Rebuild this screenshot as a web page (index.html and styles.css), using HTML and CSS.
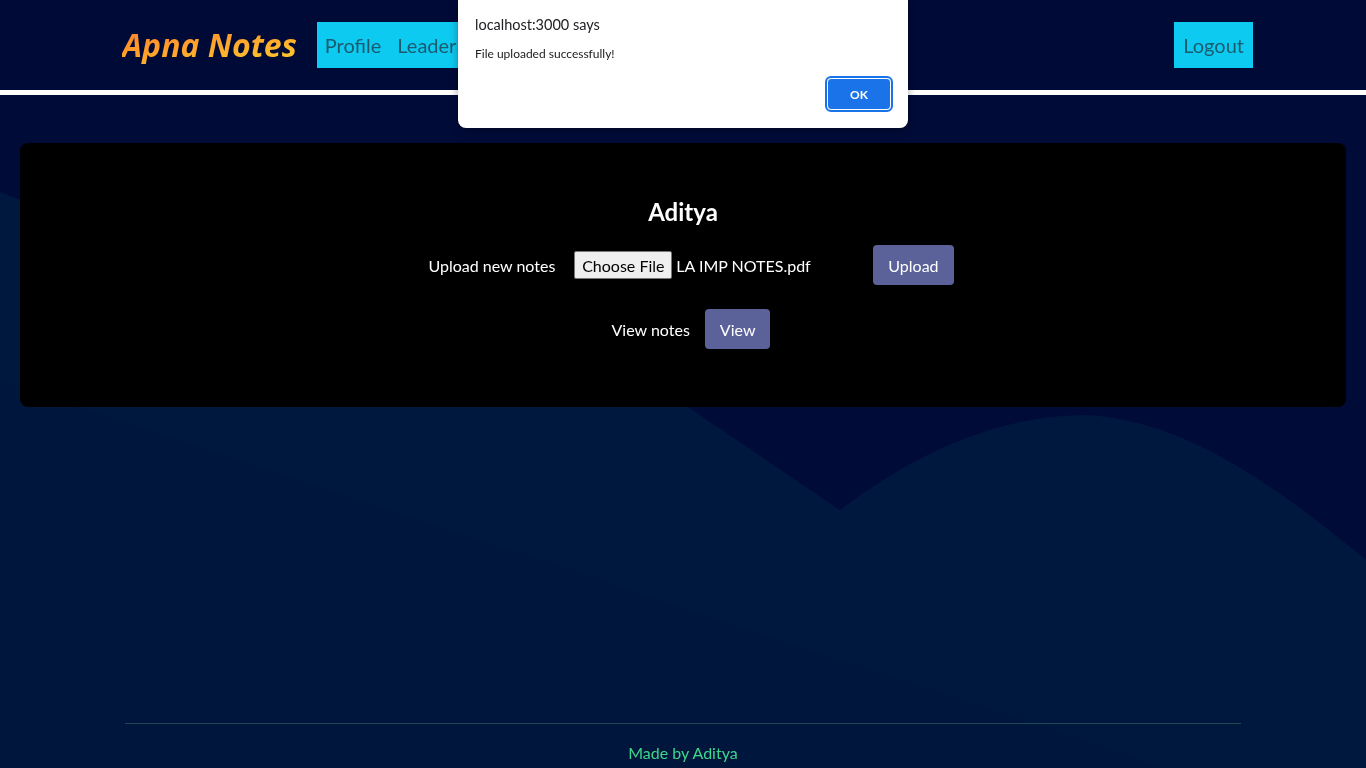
FILE: index.html
```html
<!DOCTYPE html>
<html lang="en">
<head>
<meta charset="utf-8">
<title>Apna Notes</title>
<link rel="stylesheet" href="styles.css">
</head>
<body>
<div class="bg">
  <svg viewBox="0 0 1366 768" preserveAspectRatio="none" width="1366" height="768">
    <path d="M0,192 L60,215 C300,300 560,380 688,407 L840,510 C920,450 1000,415 1088,415 C1180,420 1270,480 1366,560 L1366,768 L0,768 Z" fill="#00173e"/>
    <path d="M0,380 C200,450 450,530 600,580 C800,650 1000,710 1162,768 L0,768 Z" fill="#00163c"/>
  </svg>
</div>
<div class="page">
  <header class="navbar">
    <div class="nav-inner">
      <a class="brand">Apna Notes</a>
      <nav class="nav-links">
        <a class="nav-link">Profile</a>
        <a class="nav-link">Leaderboard</a>
      </nav>
      <div class="spacer"></div>
      <a class="nav-link logout">Logout</a>
    </div>
  </header>
  <div class="rule"></div>

  <main class="card">
    <h3 class="name">Aditya</h3>
    <div class="row upload-row">
      <span class="label">Upload new notes</span>
      <div class="file-input">
        <span class="file-btn">Choose File</span>
        <span class="file-name">LA IMP NOTES.pdf</span>
      </div>
      <button class="btn">Upload</button>
    </div>
    <div class="row view-row">
      <span class="label">View notes</span>
      <button class="btn">View</button>
    </div>
  </main>

  <footer class="footer">
    <div class="footer-line"></div>
    <p class="made">Made by Aditya</p>
  </footer>
</div>

<div class="dialog">
  <div class="dialog-title">localhost:3000 says</div>
  <div class="dialog-msg">File uploaded successfully!</div>
  <div class="dialog-actions">
    <button class="ok">OK</button>
  </div>
</div>
</body>
</html>
```

FILE: styles.css
```css
* { box-sizing: border-box; }
html, body { margin: 0; padding: 0; }
body {
  font-family: "Segoe UI", Lato, "Noto Sans", sans-serif;
  background: #000b38;
  color: #fff;
  width: 1366px;
  height: 768px;
  overflow: hidden;
}
.bg {
  position: fixed;
  inset: 0;
  z-index: 0;
}
.bg svg { display: block; }
.page {
  position: relative;
  z-index: 1;
  height: 768px;
  display: flex;
  flex-direction: column;
}
.navbar {
  height: 90px;
  background: #000a36;
}
.nav-inner {
  width: 1140px;
  margin: 0 auto;
  height: 100%;
  display: flex;
  align-items: center;
  padding-left: 9px;
}
.brand {
  font-family: "Open Sans", "Noto Sans", sans-serif;
  font-size: 32px;
  font-weight: 700;
  font-style: italic;
  background: linear-gradient(170deg, #ff7f2a 0%, #ffa52c 50%, #ffce2c 100%);
  -webkit-background-clip: text;
  background-clip: text;
  color: transparent;
  margin-right: 20px;
  line-height: 1.2;
  letter-spacing: 0;
}
.nav-links {
  display: flex;
  background: #0dcaf0;
  height: 46px;
  align-items: center;
  padding: 0 8px;
  gap: 16px;
}
.nav-link {
  font-size: 20px;
  color: #1b5b70;
}
.spacer { flex: 1; }
.logout {
  background: #0dcaf0;
  height: 46px;
  display: flex;
  align-items: center;
  padding: 0 9px;
}
.rule {
  height: 5px;
  background: #fff;
}
.card {
  margin: 48px 20px 0;
  height: 264px;
  background: #000;
  border-radius: 8px;
  padding-top: 54px;
  display: flex;
  flex-direction: column;
  align-items: center;
}
.name {
  margin: 0;
  font-size: 24px;
  font-weight: 700;
  line-height: 30px;
}
.row {
  display: flex;
  align-items: center;
  font-size: 16px;
  padding-left: 16px;
}
.upload-row { margin-top: 18px; }
.view-row { margin-top: 24px; }
.label { margin-right: 19px; }
.view-row .label { margin-right: 15px; }
.file-input {
  display: flex;
  align-items: center;
  width: 283px;
  margin-right: 16px;
}
.file-btn {
  background: #efefef;
  color: #000;
  border: 1px solid #767676;
  border-radius: 2px;
  height: 28px;
  width: 98px;
  display: flex;
  align-items: center;
  justify-content: center;
  margin-right: 4px;
}
.btn {
  font-family: inherit;
  font-size: 16px;
  color: #fff;
  background: #5a6299;
  border: none;
  border-radius: 4px;
  height: 40px;
  padding: 0 15px;
}
.footer {
  margin-top: auto;
  display: flex;
  flex-direction: column;
  align-items: center;
  padding-bottom: 4px;
}
.footer-line {
  width: 1116px;
  height: 1px;
  background: #1b4b50;
}
.made {
  margin: 18px 0 0;
  font-size: 16px;
  line-height: 22px;
  color: #3dd68c;
}
.dialog {
  position: absolute;
  top: 0;
  left: 458px;
  width: 450px;
  height: 128px;
  background: #fff;
  border-radius: 0 0 8px 8px;
  box-shadow: 0 2px 8px rgba(0,0,0,0.35);
  z-index: 5;
  color: #202124;
  padding: 15px 17px 0;
}
.dialog-title {
  font-size: 14.5px;
  line-height: 20px;
}
.dialog-msg {
  font-size: 12px;
  margin-top: 11px;
  line-height: 16px;
}
.dialog-actions {
  display: flex;
  justify-content: flex-end;
  margin-top: 16px;
}
.ok {
  width: 64px;
  height: 32px;
  background: #1a73e8;
  color: #fff;
  font-family: inherit;
  font-weight: 700;
  font-size: 12px;
  border: 1px solid #fff;
  border-radius: 4px;
  outline: 2px solid #1a73e8;
  outline-offset: 0;
}
```
